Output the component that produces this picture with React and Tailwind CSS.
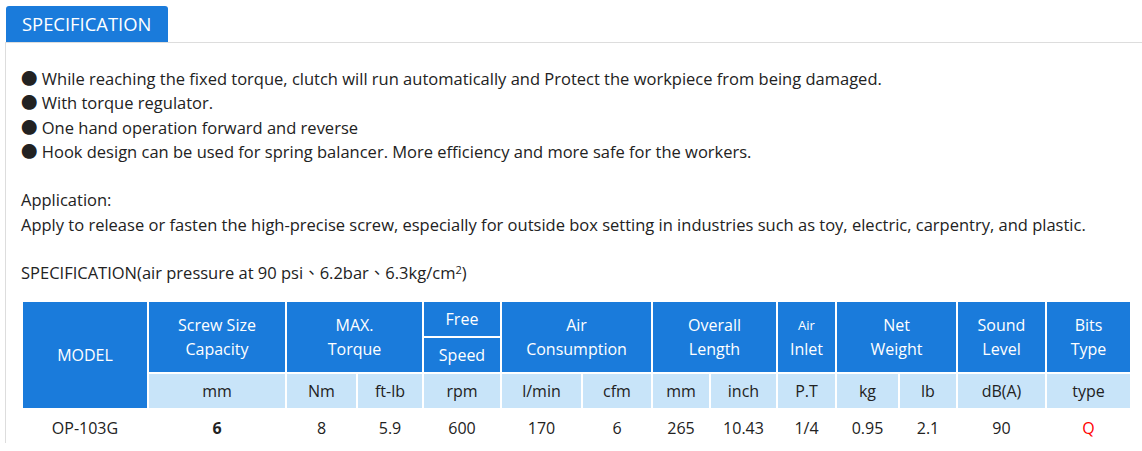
import React from "react";

const font = { fontFamily: '"Open Sans", "Noto Sans", "Noto Sans CJK TC", sans-serif' };

function H({ className = "", children }) {
  return (
    <div className={"bg-[#1a7bdb] text-white flex items-center justify-center text-center leading-[24px] text-[16px] " + className}>
      {children}
    </div>
  );
}
function S({ className = "", children }) {
  return (
    <div className={"bg-[#c8e4f9] text-[#222] flex items-center justify-center text-[16px] " + className}>
      {children}
    </div>
  );
}
function D({ className = "", children }) {
  return (
    <div className={"text-[#222] flex items-center justify-center text-[16px] " + className}>{children}</div>
  );
}

export default function App() {
  return (
    <div className="w-[1142px] h-[451px] overflow-hidden bg-white pt-[6px] pl-[5px]" style={font}>
      <div className="border-b border-[#ddd] flex">
        <div className="ml-[1px] w-[162px] h-[36px] bg-[#1a7bdb] rounded-t-[3px] text-white text-[18.4px] flex items-center pl-[16px]">
          SPECIFICATION
        </div>
      </div>
      <div className="border-l border-[#ddd] pl-[15px] pt-[24px] h-[400px]">
        <div className="text-[16.5px] leading-[24.3px] text-[#222]">
          <div>● While reaching the fixed torque, clutch will run automatically and Protect the workpiece from being damaged.</div>
          <div>● With torque regulator.</div>
          <div>● One hand operation forward and reverse</div>
          <div>● Hook design can be used for spring balancer. More efficiency and more safe for the workers.</div>
          <div>&nbsp;</div>
          <div>Application:</div>
          <div>Apply to release or fasten the high-precise screw, especially for outside box setting in industries such as toy, electric, carpentry, and plastic.</div>
          <div>&nbsp;</div>
          <div>
            SPECIFICATION(air pressure at 90 psi、6.2bar、6.3kg/cm<sup className="text-[11px]">2</sup>)
          </div>
        </div>
        <div className="mt-[16px] ml-[2px] grid grid-cols-[124px_136px_69px_64px_76px_79px_68px_56px_65px_57px_61px_56px_87px_83px] grid-rows-[34px_34px_34px_36px] gap-[2px]">
          <H className="row-span-3">MODEL</H>
          <H className="row-span-2">Screw Size<br />Capacity</H>
          <H className="row-span-2 col-span-2">MAX.<br />Torque</H>
          <H>Free</H>
          <H className="row-span-2 col-span-2">Air<br />Consumption</H>
          <H className="row-span-2 col-span-2">Overall<br />Length</H>
          <H className="row-span-2 flex-col">
            <span className="text-[13px] leading-[24px]">Air</span>
            <span>Inlet</span>
          </H>
          <H className="row-span-2 col-span-2">Net<br />Weight</H>
          <H className="row-span-2">Sound<br />Level</H>
          <H className="row-span-2">Bits<br />Type</H>
          <H className="col-start-5 row-start-2">Speed</H>
          <S className="col-start-2 row-start-3">mm</S>
          <S>Nm</S>
          <S>ft-lb</S>
          <S>rpm</S>
          <S>l/min</S>
          <S>cfm</S>
          <S>mm</S>
          <S>inch</S>
          <S>P.T</S>
          <S>kg</S>
          <S>lb</S>
          <S>dB(A)</S>
          <S>type</S>
          <D>OP-103G</D>
          <D className="font-bold text-[13px]">6</D>
          <D>8</D>
          <D>5.9</D>
          <D>600</D>
          <D>170</D>
          <D>6</D>
          <D>265</D>
          <D>10.43</D>
          <D>1/4</D>
          <D>0.95</D>
          <D>2.1</D>
          <D>90</D>
          <D className="text-[#f00]">Q</D>
        </div>
      </div>
    </div>
  );
}
